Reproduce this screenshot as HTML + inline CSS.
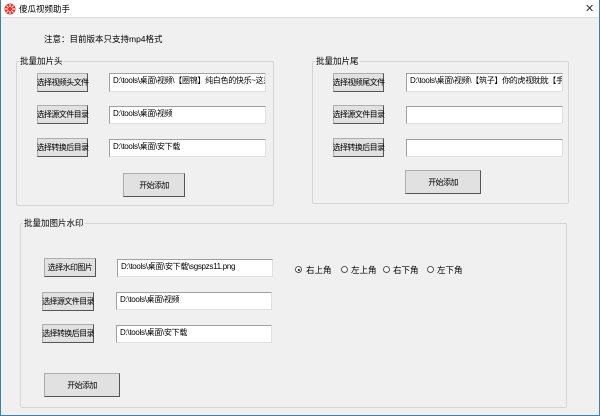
<!DOCTYPE html>
<html><head><meta charset="utf-8"><style>
*{margin:0;padding:0;box-sizing:border-box}
body{width:600px;height:416px;background:#f0f0f0;position:relative;overflow:hidden;font-family:"Liberation Sans","Noto Sans CJK SC",sans-serif;font-size:8.5px;color:#000}
.win{position:absolute;left:0;top:0;width:600px;height:416px;border:1px solid #3c7fb1;border-top:none}
.title{position:absolute;left:0;top:0;width:600px;height:18px;background:#fff;border-bottom:1px solid #ddd}
.a{position:absolute;white-space:nowrap}
.grp{position:absolute;border:1px solid #d5d5d5;border-radius:2px}
.grp span{position:absolute;left:2px;top:-6px;background:#f0f0f0;padding:0 1px;line-height:11px}
.btn{position:absolute;background:#e1e1e1;border:1px solid #adadad;border-right-color:#555;border-bottom-color:#555;text-align:center;display:flex;align-items:center;justify-content:center;font-size:8px;white-space:nowrap;letter-spacing:-0.6px;overflow:visible}
.tb{position:absolute;background:#fff;border:1px solid #a0a0a0;border-right-color:#e0e0e0;border-bottom-color:#e0e0e0;padding:2px 3px;font-size:8px;line-height:10px;overflow:hidden;white-space:nowrap;letter-spacing:-0.3px}
.r{position:absolute;width:7px;height:7px;border:1px solid #555;border-radius:50%;background:#fff}
</style></head><body>
<div class="title">
<svg class="a" style="left:4px;top:3px" width="12" height="12" viewBox="0 0 12 12"><circle cx="6" cy="6" r="5.5" fill="#e8332a"/><path d="M6 1v10M1 6h10M2.5 2.5l7 7M9.5 2.5l-7 7" stroke="#fff" stroke-width="1"/><circle cx="6" cy="6" r="2" fill="#e8332a"/></svg>
<div class="a" style="left:19px;top:3px;font-size:8.5px">傻瓜视频助手</div>
<div class="a" style="left:585px;top:2px;font-size:11px;color:#333">✕</div>
</div>
<div class="win"></div>
<div class="a" style="left:44px;top:33px">注意：目前版本只支持mp4格式</div>

<div class="grp" style="left:16px;top:61px;width:258px;height:145px"><span>批量加片头</span></div>
<div class="btn" style="left:37px;top:73px;width:51px;height:19px">选择视频头文件</div>
<div class="tb" style="left:109px;top:73px;width:157px;height:19px">D:\tools\桌面\视频\【圈锦】纯白色的快乐~这是六</div>
<div class="btn" style="left:37px;top:105px;width:51px;height:19px">选择源文件目录</div>
<div class="tb" style="left:109px;top:106px;width:157px;height:18px">D:\tools\桌面\视频</div>
<div class="btn" style="left:37px;top:138px;width:51px;height:19px">选择转换后目录</div>
<div class="tb" style="left:109px;top:139px;width:157px;height:18px">D:\tools\桌面\安下载</div>
<div class="btn" style="left:123px;top:173px;width:62px;height:24px">开始添加</div>

<div class="grp" style="left:312px;top:61px;width:257px;height:143px"><span>批量加片尾</span></div>
<div class="btn" style="left:333px;top:73px;width:51px;height:19px">选择视频尾文件</div>
<div class="tb" style="left:406px;top:73px;width:157px;height:19px">D:\tools\桌面\视频\【筑子】你的虎视眈眈【手机</div>
<div class="btn" style="left:333px;top:105px;width:51px;height:19px">选择源文件目录</div>
<div class="tb" style="left:406px;top:106px;width:157px;height:18px"></div>
<div class="btn" style="left:333px;top:138px;width:51px;height:19px">选择转换后目录</div>
<div class="tb" style="left:406px;top:139px;width:157px;height:18px"></div>
<div class="btn" style="left:405px;top:170px;width:76px;height:24px">开始添加</div>

<div class="grp" style="left:20px;top:223px;width:547px;height:185px"><span>批量加图片水印</span></div>
<div class="btn" style="left:44px;top:258px;width:52px;height:19px">选择水印图片</div>
<div class="tb" style="left:117px;top:259px;width:156px;height:18px">D:\tools\桌面\安下载\sgspzs11.png</div>
<div class="btn" style="left:42px;top:292px;width:52px;height:19px">选择源文件目录</div>
<div class="tb" style="left:116px;top:292px;width:156px;height:18px">D:\tools\桌面\视频</div>
<div class="btn" style="left:42px;top:324px;width:52px;height:19px">选择转换后目录</div>
<div class="tb" style="left:116px;top:325px;width:156px;height:18px">D:\tools\桌面\安下载</div>
<div class="btn" style="left:44px;top:373px;width:76px;height:24px">开始添加</div>

<div class="r" style="left:295px;top:266px"><div style="position:absolute;left:1.5px;top:1.5px;width:2px;height:2px;background:#000;border-radius:50%"></div></div>
<div class="a" style="left:306px;top:264px">右上角</div>
<div class="r" style="left:341px;top:266px"></div>
<div class="a" style="left:351px;top:264px">左上角</div>
<div class="r" style="left:383px;top:266px"></div>
<div class="a" style="left:393px;top:264px">右下角</div>
<div class="r" style="left:427px;top:266px"></div>
<div class="a" style="left:437px;top:264px">左下角</div>
</body></html>
